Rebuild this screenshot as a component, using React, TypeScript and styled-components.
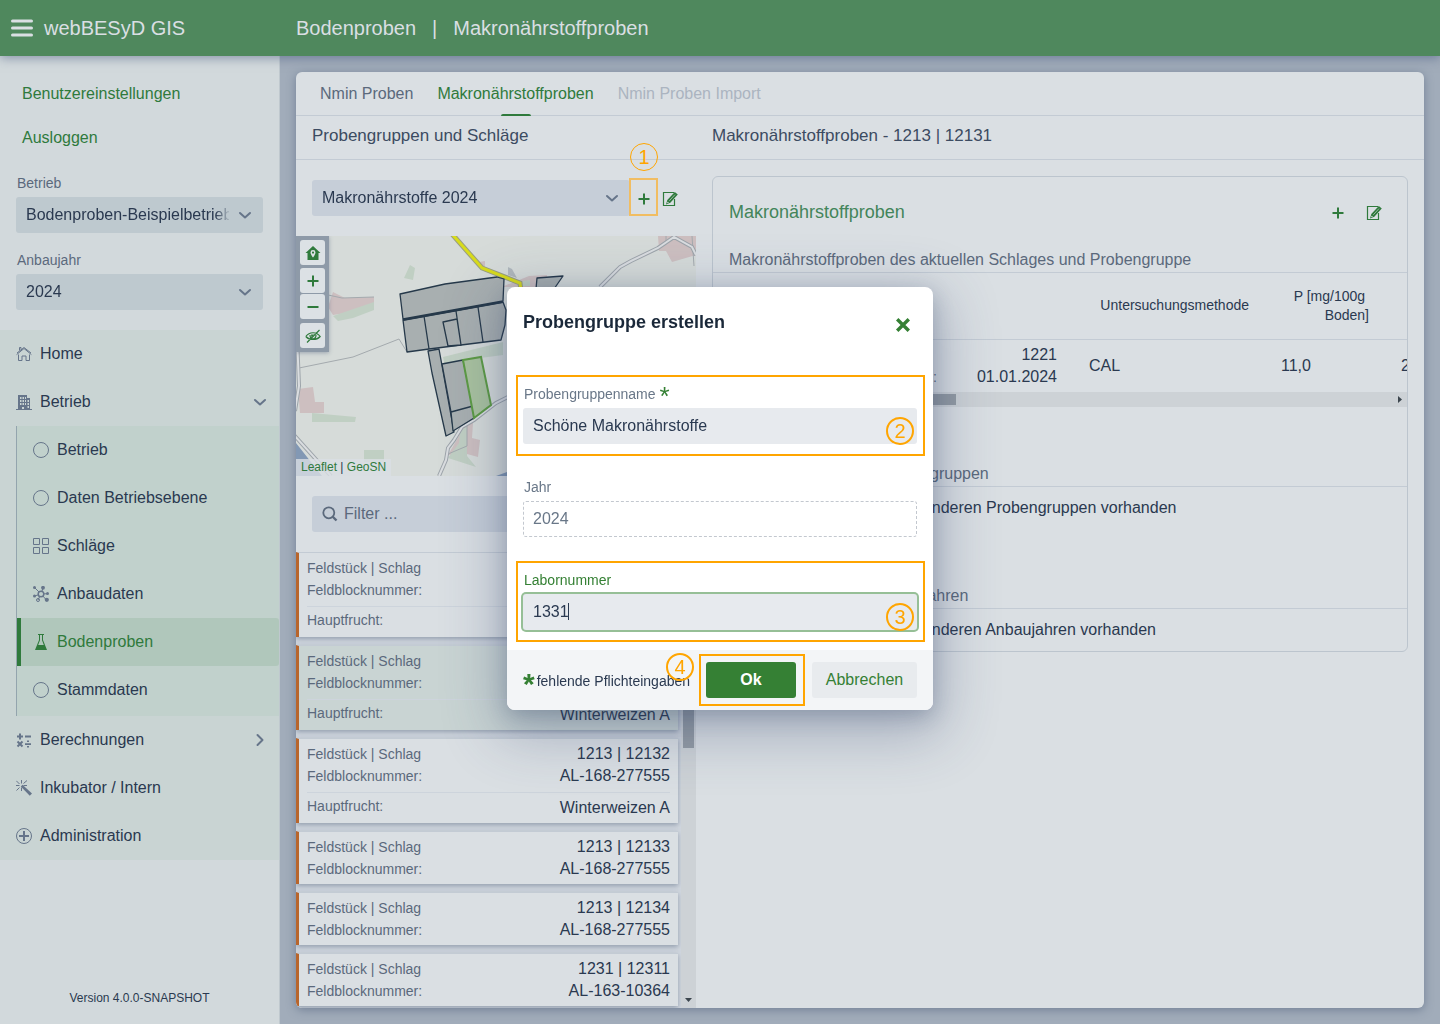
import React from 'react';
import styled, { createGlobalStyle, css } from 'styled-components';

const c = {
  green: '#2f7a3c',
  modalGreen: '#358034',
  header: '#4f885d',
  text: '#2a3950',
  sub: '#5b697c',
  icon: '#66758a',
  panel: '#dadfe3',
  line: '#c3cbd4',
  field: '#c6ced8',
  mark: '#ffa500',
};

const Global = createGlobalStyle`
  *, *::before, *::after { box-sizing: border-box; }
  html, body, #root { height: 100%; }
  body {
    margin: 0;
    background: #a1acba;
    color: ${c.text};
    font: 16px/22px "Liberation Sans", Arial, sans-serif;
    overflow: hidden;
  }
  button, input, select { font: inherit; color: inherit; }
  button { border: 0; padding: 0; background: none; cursor: pointer; }
  a { color: ${c.green}; text-decoration: none; }
  h1, h2, h3, p, ul { margin: 0; padding: 0; font-weight: normal; }
  ul { list-style: none; }
  svg { display: block; flex: none; }
`;

const Page = styled.div`
  display: grid;
  grid-template: 56px minmax(0, 1fr) / 280px minmax(0, 1fr);
  height: 100vh;
`;
const TopBar = styled.header`
  grid-column: 1 / -1;
  display: grid;
  grid-template-columns: 280px 1fr;
  align-items: center;
  background: ${c.header};
  color: #dadfe3;
  font-size: 20px;
  box-shadow: 0 2px 10px rgba(60, 80, 120, 0.5);
  z-index: 1;
`;
const Brand = styled.div`
  display: flex;
  align-items: center;
  gap: 11px;
  padding-left: 11px;
`;
const Burger = styled.button`
  color: inherit;
`;
const Crumbs = styled.h1`
  display: flex;
  gap: 16px;
  padding-left: 16px;
  font-size: 20px;
`;

const Sidebar = styled.aside`
  display: flex;
  flex-direction: column;
  background: #d2d9dc;
  border-right: 1px solid #bfc8ce;
  min-height: 0;
`;
const UserLinks = styled.div`
  display: flex;
  flex-direction: column;
  gap: 22px;
  padding: 27px 22px 24px;
`;
const SideFields = styled.div`
  display: flex;
  flex-direction: column;
  gap: 17px;
  padding: 0 16px 20px;
`;
const SideField = styled.div`
  display: flex;
  flex-direction: column;
  gap: 3px;
`;
const SideLabel = styled.label`
  padding-left: 1px;
  color: ${c.sub};
  font-size: 14px;
  line-height: 21px;
`;
const SelectBox = styled.div<{ $tone: string }>`
  position: relative;
  flex: 1;
  background: ${(p) => p.$tone};
  border-radius: 3px;
  svg {
    position: absolute;
    top: 10px;
    right: 10px;
    pointer-events: none;
    color: ${c.icon};
  }
`;
const Select = styled.select`
  display: block;
  width: 100%;
  height: 36px;
  padding: 0 34px 0 10px;
  border: 0;
  background: none;
  appearance: none;
  mask-image: linear-gradient(to right, #000 calc(100% - 48px), transparent calc(100% - 32px));
`;
const Nav = styled.nav`
  background: #c9d4d3;
`;
const navItem = css`
  display: flex;
  align-items: center;
  gap: 8px;
  height: 48px;
  color: ${c.text};
  svg { color: ${c.icon}; }
`;
const NavLink = styled.a`
  ${navItem}
  padding: 0 11px 0 16px;
  span { flex: 1; }
`;
const SubNav = styled.ul`
  margin-left: 16px;
  padding-bottom: 2px;
  background: #c1d1cc;
  border-left: 1px solid #93a4ad;
`;
const SubLink = styled.a<{ $active?: boolean }>`
  ${navItem}
  padding-left: 16px;
  ${(p) =>
    p.$active &&
    css`
      padding-left: 12px;
      border-left: 4px solid ${c.green};
      border-radius: 0 3px 3px 0;
      background: #b0c7bb;
      color: ${c.green};
      svg { color: ${c.green}; }
    `}
`;
const Version = styled.p`
  margin-top: auto;
  padding-bottom: 15px;
  font-size: 12px;
  text-align: center;
`;

const Main = styled.main`
  padding: 16px;
  min-width: 0;
  min-height: 0;
`;
const Panel = styled.section`
  display: flex;
  flex-direction: column;
  height: 100%;
  overflow: hidden;
  background: ${c.panel};
  border-radius: 6px;
  box-shadow: 0 2px 10px rgba(70, 85, 115, 0.5);
`;
const Tabs = styled.div`
  display: flex;
  gap: 24px;
  height: 44px;
  padding: 0 24px;
  border-bottom: 1px solid ${c.line};
`;
const Tab = styled.button<{ $active?: boolean }>`
  position: relative;
  height: 44px;
  color: ${(p) => (p.$active ? c.green : c.sub)};
  &:disabled { color: #abb4c0; }
  ${(p) =>
    p.$active &&
    css`
      &::after {
        content: '';
        position: absolute;
        left: 50%;
        bottom: 0;
        width: 30px;
        height: 2px;
        margin-left: -15px;
        background: ${c.green};
        border-radius: 2px 2px 0 0;
      }
    `}
`;
const Split = styled.div`
  flex: 1;
  display: grid;
  grid-template-columns: 400px minmax(0, 1fr);
  min-height: 0;
`;
const Column = styled.div`
  display: flex;
  flex-direction: column;
  min-width: 0;
  min-height: 0;
`;
const ColumnTitle = styled.h2`
  flex: none;
  height: 44px;
  padding: 0 16px;
  border-bottom: 1px solid ${c.line};
  color: #3c4b61;
  font-size: 17px;
  line-height: 39px;
`;
const GroupRow = styled.div`
  display: flex;
  align-items: center;
  padding: 20px 18px 20px 16px;
`;
const IconButton = styled.button`
  display: flex;
  align-items: center;
  justify-content: center;
  position: relative;
  width: 28px;
  height: 36px;
  padding-top: 2px;
  color: ${c.green};
`;
const EditButton = styled(IconButton)`
  width: 20px;
  justify-content: flex-end;
`;
const Frame = styled.span<{ $inset: string; $soft?: boolean }>`
  position: absolute;
  inset: ${(p) => p.$inset};
  border: 2px solid ${(p) => (p.$soft ? '#f1bd62' : c.mark)};
  pointer-events: none;
`;
const Badge = styled.span<{ $thin?: boolean }>`
  position: absolute;
  width: 28px;
  height: 28px;
  border: ${(p) => (p.$thin ? 1 : 2)}px solid ${c.mark};
  border-radius: 50%;
  color: ${c.mark};
  font-size: 20px;
  font-weight: normal;
  line-height: ${(p) => (p.$thin ? 27 : 25)}px;
  text-align: center;
  pointer-events: none;
`;
const GroupBadge = styled(Badge)`top: -37px; left: 0;`;
const FieldBadge = styled(Badge)`right: 3px; bottom: -1px;`;
const OkBadge = styled(Badge)`top: -9px; left: -40px;`;

const MapView = styled.div`
  position: relative;
  flex: none;
  height: 240px;
  overflow: hidden;
  background: #d6dbd9;
`;
const MapTools = styled.div`
  position: absolute;
  top: 0;
  left: 0;
  display: flex;
  flex-direction: column;
  width: 33px;
  padding: 4px;
  background: #8e9aa8;
  box-shadow: 0 1px 4px rgba(70, 85, 115, 0.4);
`;
const MapTool = styled.button<{ $gap?: number }>`
  display: flex;
  align-items: center;
  justify-content: center;
  height: 25px;
  margin-bottom: ${(p) => p.$gap ?? 0}px;
  background: #dce1e5;
  border-radius: 3px;
  color: ${c.green};
`;
const Attribution = styled.div`
  position: absolute;
  left: 0;
  bottom: 0;
  padding: 0 5px;
  background: rgba(218, 223, 227, 0.8);
  font-size: 12px;
  line-height: 17px;
`;
const FilterRow = styled.div`
  padding: 20px 16px;
`;
const FilterBox = styled.label`
  display: flex;
  align-items: center;
  gap: 6px;
  height: 36px;
  padding: 0 10px;
  background: ${c.field};
  border-radius: 3px;
  color: ${c.sub};
  input {
    flex: 1;
    min-width: 0;
    padding: 0;
    border: 0;
    outline: 0;
    background: none;
  }
  input::placeholder { color: ${c.sub}; opacity: 1; }
`;
const ListArea = styled.div`
  flex: 1;
  display: flex;
  min-height: 0;
`;
const List = styled.ul`
  flex: 1;
  display: flex;
  flex-direction: column;
  gap: 8px;
  padding-right: 3px;
  overflow: hidden;
  background: #d0d6de;
`;
const PlotCard = styled.li<{ $active?: boolean }>`
  flex: none;
  padding: 4px 8px;
  border-top: 1px solid ${c.line};
  border-left: 3px solid #b8652c;
  background: ${(p) => (p.$active ? '#c9d4d3' : c.panel)};
  box-shadow: 0 2px 5px rgba(70, 90, 115, 0.45);
`;
const Pair = styled.div`
  display: flex;
  justify-content: space-between;
`;
const Key = styled.span`
  color: ${c.sub};
  font-size: 14px;
`;
const Crop = styled(Pair)`
  margin-top: 5px;
  padding-top: 4px;
  border-top: 1px solid #cdd4dc;
  line-height: 22px;
  span:first-child { line-height: 19px; }
`;
const VScroll = styled.div`
  display: flex;
  flex-direction: column;
  align-items: center;
  justify-content: space-between;
  width: 15px;
  padding-bottom: 5px;
  background: #cdd2d6;
  &::before {
    content: '';
    width: 11px;
    height: 196px;
    background: #949ca4;
  }
`;

const Card = styled.div`
  margin: 16px;
  border: 1px solid #bcc5ce;
  border-radius: 6px;
  overflow: hidden;
`;
const CardHead = styled.div`
  display: flex;
  align-items: center;
  gap: 16px;
  height: 70px;
  padding: 0 23px 0 16px;
`;
const CardTitle = styled.h3`
  flex: 1;
  color: #43855a;
  font-size: 18px;
`;
const CardButton = styled(IconButton)`
  width: 20px;
`;
const SectionTitle = styled.h3<{ $top?: number }>`
  margin-top: ${(p) => p.$top ?? 0}px;
  padding: 2px 16px 1px;
  border-bottom: 1px solid ${c.line};
  color: ${c.sub};
  font-size: 16px;
`;
const Empty = styled.p`
  padding: 10px 24px;
`;
const Table = styled.table`
  table-layout: fixed;
  width: 792px;
  border-collapse: collapse;
  th {
    height: 66px;
    padding: 0 16px;
    border-bottom: 1px solid ${c.line};
    font-size: 14px;
    font-weight: normal;
    line-height: 19px;
    text-align: right;
  }
  td { height: 53px; padding: 0 16px; }
`;
const Probe = styled.div`
  display: grid;
  grid-template-columns: 1fr auto 120px;
  span { grid-column: 2; }
  b { grid-column: 3; text-align: right; font-weight: normal; }
`;
const HScroll = styled.div`
  display: flex;
  align-items: center;
  justify-content: space-between;
  height: 15px;
  padding: 0 4px 0 15px;
  background: #cdd2d6;
  &::before {
    content: '';
    width: 228px;
    height: 11px;
    background: #949ca4;
  }
`;

const Backdrop = styled.div`
  position: fixed;
  inset: 0;
  z-index: 2;
  display: flex;
  align-items: center;
  justify-content: center;
  padding-bottom: 27px;
`;
const Dialog = styled.form`
  width: 426px;
  background: #fff;
  border-radius: 8px;
  box-shadow: 0 6px 20px rgba(40, 60, 90, 0.25), 0 16px 56px 10px rgba(50, 65, 110, 0.3);
`;
const DialogHead = styled.div`
  display: flex;
  align-items: center;
  justify-content: space-between;
  height: 70px;
  padding: 0 22px 0 16px;
  h2 { color: #1a2839; font-size: 18px; font-weight: bold; }
  button { padding-top: 5px; color: ${c.modalGreen}; }
`;
const DialogBody = styled.div`
  display: flex;
  flex-direction: column;
  gap: 32px;
  padding: 26px 16px 20px;
`;
const Field = styled.div`
  position: relative;
  display: flex;
  flex-direction: column;
  gap: 2px;
`;
const Label = styled.label<{ $focus?: boolean }>`
  padding-left: 1px;
  color: ${(p) => (p.$focus ? c.modalGreen : '#697788')};
  font-size: 14px;
  line-height: 23px;
`;
const Star = styled.span<{ $large?: boolean }>`
  color: ${c.modalGreen};
  font-size: ${(p) => (p.$large ? 30 : 26)}px;
  font-weight: ${(p) => (p.$large ? 'bold' : 'normal')};
  line-height: 0;
  margin-right: 2px;
  vertical-align: ${(p) => (p.$large ? -8 : -6)}px;
`;
const Input = styled.input<{ $focus?: boolean }>`
  width: 100%;
  height: 36px;
  padding: 0 10px;
  border: 0;
  border-radius: 3px;
  outline: 0;
  background: #e7eaee;
  color: #2a3950;
  ${(p) => p.$focus && 'box-shadow: 0 0 0 2px #96bf96; caret-color: transparent;'}
  &:read-only { border: 1px dashed #c3c8cf; padding: 0 9px; background: #fff; color: #697788; }
`;
const Caret = styled.i`
  position: absolute;
  left: 45px;
  bottom: 10px;
  width: 1px;
  height: 17px;
  background: ${c.text};
`;
const DialogFoot = styled.div`
  display: flex;
  align-items: center;
  justify-content: space-between;
  height: 60px;
  padding: 0 16px;
  background: #f3f5f7;
  border-radius: 0 0 8px 8px;
  p { padding-top: 2px; font-size: 14px; white-space: nowrap; }
`;
const Actions = styled.div`
  display: flex;
  gap: 16px;
`;
const Button = styled.button<{ $primary?: boolean }>`
  position: relative;
  width: ${(p) => (p.$primary ? 90 : 105)}px;
  height: 36px;
  border-radius: 3px;
  background: ${(p) => (p.$primary ? c.modalGreen : '#e8ebee')};
  color: ${(p) => (p.$primary ? '#fff' : c.modalGreen)};
  font-weight: ${(p) => (p.$primary ? 'bold' : 'normal')};
`;

const Svg = ({ size = 16, children }: { size?: number; children: React.ReactNode }) => (
  <svg width={size} height={size} viewBox="0 0 16 16" fill="currentColor" aria-hidden="true">
    {children}
  </svg>
);
const Chevron = ({ right }: { right?: boolean }) => (
  <Svg>
    <path
      d={right ? 'M5.500 3 10.500 8l-5 5' : 'M3 6l5 4.500L13 6'}
      fill="none"
      stroke="currentColor"
      strokeWidth="2"
      strokeLinecap="round"
      strokeLinejoin="round"
    />
  </Svg>
);
const Plus = () => <Svg><path d="M7 2.500h2V7h4.500v2H9v4.500H7V9H2.500V7H7z" /></Svg>;
const Edit = () => (
  <Svg>
    <path d="M12.500 8v6.500h-11v-13H12" fill="none" stroke="currentColor" strokeWidth="1.200" />
    <path d="M12.800 1 15.800 3.600 8.300 11.800 4 13.500 5.300 9z" />
    <path d="M7.300 9.800 13 3.600" stroke="#dadfe3" strokeWidth=".6" />
    <circle cx="5.900" cy="11.500" r=".7" fill="#dadfe3" />
  </Svg>
);
const Home = () => (
  <Svg>
    <path d="M.6 8.600 8 2.500l7.400 6.100M2.500 8.500v6H6v-4.500h4v4.500h3.500v-6M1 7l7-5.500L15 7M3.500 4.500v-3h1.500v2" fill="none" stroke="currentColor" />
  </Svg>
);
const Building = () => (
  <Svg>
    <path fillRule="evenodd" d="M2 1h9v3h3v11h2v1H0v-1h2zM4 3v2h1.500V3zm2.500 0v2H8V3zM9 3v2h1V3zM4 6v2h1.500V6zm2.500 0v2H8V6zM9 6v2h1V6zM4 9v2h1.500V9zm2.500 0v2H8V9zM9 9v2h1V9zm2.500-3v2H13V6zm0 3v2H13V9zM6 13v2h2v-2zm5.500-1v2H13v-2z" />
  </Svg>
);
const Circle = () => <Svg><circle cx="8" cy="8" r="7.500" fill="none" stroke="currentColor" /></Svg>;
const Grid = () => <Svg><path d="M.5.500h6v6h-6zM9.500.500h6v6h-6zM.5 9.500h6v6h-6zM9.500 9.500h6v6h-6z" fill="none" stroke="currentColor" /></Svg>;
const Cluster = () => (
  <Svg>
    <path d="M8 8 1.500 1.500M8 8l2-6M8 8l6.500-.3M8 8l5 5.500M8 8l-3 6M8 8l-6.500 2" stroke="currentColor" />
    <circle cx="8" cy="8" r="2.800" fill="#c1d1cc" stroke="currentColor" strokeWidth="1.500" />
    <circle cx="1.500" cy="1.500" r="1.500" /><circle cx="10" cy="1.800" r="1.900" /><circle cx="14.500" cy="7.500" r="1.500" />
    <circle cx="13.800" cy="13.800" r="2.100" /><circle cx="5" cy="14" r="1.500" fill="none" stroke="currentColor" /><circle cx="1.500" cy="10" r="1.500" />
  </Svg>
);
const Flask = () => (
  <Svg>
    <path d="M5 0h6v1h-1v5l4 10H2L6 6V1H5zm2 1v5.200L5.200 11h5.600L9 6.200V1z" fillRule="evenodd" />
  </Svg>
);
const Calc = () => (
  <Svg>
    <path d="M3 1.500h2V3.500h2v2H5v2H3v-2H1v-2h2zM9 3.500h6v2H9zM9 11.200h6v1.700H9zM11 8.500h2V10h-2zM11 14h2v1.500h-2z" />
    <path d="m1.500 9.500 5 5m0-5-5 5" stroke="currentColor" strokeWidth="2" />
  </Svg>
);
const Wand = () => (
  <Svg>
    <path d="M5.500 0v3.500M.3.800 3.500 4M0 5.500h3.500M5.500 7.500V11M.5 10.500 3.500 7.500M7.500 3.500 11 .500M7.500 5.500H11" stroke="currentColor" fill="none" />
    <path d="M4.800 6.500 6.500 4.800 16 13.500 13.800 15.800z" />
  </Svg>
);
const PlusCircle = () => <Svg><circle cx="8" cy="8" r="7.500" fill="none" stroke="currentColor" /><path d="M7 3h2v4h4v2H9v4H7V9H3V7h4z" /></Svg>;
const HomePin = () => (
  <Svg>
    <path fillRule="evenodd" d="M8 1 15.500 8h-2v7h-11V8h-2zM8 5a2.500 2.500 0 0 0-2.500 2.600C5.500 9.500 8 12.500 8 12.500s2.500-3 2.500-4.900A2.500 2.500 0 0 0 8 5zm0 1.500a1.100 1.100 0 1 1 0 2.200 1.100 1.100 0 0 1 0-2.200z" />
  </Svg>
);
const EyeOff = () => (
  <Svg>
    <path d="M.8 8.500C4.500 3.500 11.500 3.500 15.200 8.500 11.500 12.500 4.500 12.500.8 8.500M5 7c0 5 6 5 6 0M2 14.500 14.500 2" fill="none" stroke="currentColor" strokeWidth="1.200" />
    <path d="M6 6.500h3l-2.500 3z" />
  </Svg>
);

const FieldMap = () => (
  <svg width="400" height="240" viewBox="0 0 400 240" role="img" aria-label="Schlagkarte">
    <g fill="#cdbfc0">
      <path d="M37 56 49 62 78 61v6L57 76 37 79 32 71zM2 153l15-2 2 15h9v11H4zM362 0h38v19l-24 7-6-11h-7zM183 26l6-1v6l-5 1zM208 50l25-10 18-1v12h-43zM171 186l6 1-1 15 8 2-2 17-11-3-19 1 12-21z" />
    </g>
    <g fill="#c0cfc3">
      <path d="M37 80l41-14v8l-21 8-15 3zM114 29l5 3-2 12-9-2zM16 177l44 4-1 5H16zM68 214h20v12H68zM147 121l60-15v13l-45 6-13 6zM164 196l7-6v30l9 11-28-9 11-15zM226 45l8-1v6h-8z" />
    </g>
    <path d="M0 207 26 240H0zM200 240l11-4v4z" fill="#8298b4" />
    <path d="M212 31l4 2 5 9-9-3z" fill="#b0b7bc" />
    <g fill="none" stroke="#a4aaae">
      <path d="M0 52 46 62 78 61M0 40 3 132 57 121 103 103 111 116M2 100 2 160M152 218l19-8v-21M370 0v5M396 0l2 30" />
    </g>
    <g fill="none" stroke="#9da4aa" strokeWidth="4">
      <path d="M304 51 324 31 335 25 362 12 378 1 396 11 400 19M-2 199 35 240M214 160 200 167 178 184 166 191 158 204 152 212 150 224 143 240M0 75 3 150-1 175" />
    </g>
    <g fill="none" stroke="#dadde0" strokeWidth="2">
      <path d="M304 51 324 31 335 25 362 12 378 1 396 11 400 19M-2 199 35 240M214 160 200 167 178 184 166 191 158 204 152 212 150 224 143 240M0 75 3 150-1 175" />
    </g>
    <path d="M156-2 186 32 224 47 225 55" fill="none" stroke="#999e82" strokeWidth="5" />
    <path d="M156-2 186 32 224 47 225 55" fill="none" stroke="#d8dc1b" strokeWidth="3" />
    <g fill="#a8afb0" stroke="#26394a" strokeWidth="1.300" strokeLinejoin="round">
      <path d="M104 58 149 48 201 41 208 43 207 65 107 83z" />
      <path d="M107 84 207 66 210 74 209 89 205 104 133 113 111 116z" />
      <path d="M128 80 133 113M160 75 165 109M182 71 187 106M147 86 161 83 165 109 152 110z" />
      <path d="M132 115 143 113 158 196 150 200 136 137z" />
      <path d="M146 128 167 124 177 170 155 176zM155 176 177 170 178 182 157 195z" />
      <path d="M241 42 267 40 258 53 240 53z" />
    </g>
    <path d="M107 84 207 66" stroke="#26394a" strokeWidth="2" />
    <path d="M167 124 185 121 195 169 178 182z" fill="#a9c29f" stroke="#5c9b43" strokeWidth="2" />
  </svg>
);

type Plot = { plot: string; block: string; crop?: string; active?: boolean };
const plots: Plot[] = [
  { plot: '1213 | 12130', block: 'AL-168-277555', crop: 'Winterweizen A' },
  { plot: '1213 | 12131', block: 'AL-168-277555', crop: 'Winterweizen A', active: true },
  { plot: '1213 | 12132', block: 'AL-168-277555', crop: 'Winterweizen A' },
  { plot: '1213 | 12133', block: 'AL-168-277555' },
  { plot: '1213 | 12134', block: 'AL-168-277555' },
  { plot: '1231 | 12311', block: 'AL-163-10364' },
];
const subItems = [
  { label: 'Betrieb', icon: <Circle /> },
  { label: 'Daten Betriebsebene', icon: <Circle /> },
  { label: 'Schläge', icon: <Grid /> },
  { label: 'Anbaudaten', icon: <Cluster /> },
  { label: 'Bodenproben', icon: <Flask />, active: true },
  { label: 'Stammdaten', icon: <Circle /> },
];

export default function App() {
  return (
    <>
      <Global />
      <Page>
        <TopBar>
          <Brand>
            <Burger aria-label="Menü">
              <svg width="22" height="18" viewBox="0 0 22 18">
                <path d="M1.500 2h19M1.500 9h19M1.500 16h19" stroke="currentColor" strokeWidth="3" strokeLinecap="round" />
              </svg>
            </Burger>
            <span>webBESyD GIS</span>
          </Brand>
          <Crumbs>
            <span>Bodenproben</span>
            <span>|</span>
            <span>Makronährstoffproben</span>
          </Crumbs>
        </TopBar>

        <Sidebar>
          <UserLinks>
            <a href="#einstellungen">Benutzereinstellungen</a>
            <a href="#logout">Ausloggen</a>
          </UserLinks>
          <SideFields>
            <SideField>
              <SideLabel htmlFor="betrieb">Betrieb</SideLabel>
              <SelectBox $tone="#bec9cf">
                <Select id="betrieb"><option>Bodenproben-Beispielbetrieb</option></Select>
                <Chevron />
              </SelectBox>
            </SideField>
            <SideField>
              <SideLabel htmlFor="anbaujahr">Anbaujahr</SideLabel>
              <SelectBox $tone="#bec9cf">
                <Select id="anbaujahr"><option>2024</option></Select>
                <Chevron />
              </SelectBox>
            </SideField>
          </SideFields>
          <Nav>
            <NavLink href="#home"><Home /><span>Home</span></NavLink>
            <NavLink href="#betrieb"><Building /><span>Betrieb</span><Chevron /></NavLink>
            <SubNav>
              {subItems.map((s) => (
                <li key={s.label}>
                  <SubLink href="#sub" $active={s.active}>{s.icon}<span>{s.label}</span></SubLink>
                </li>
              ))}
            </SubNav>
            <NavLink href="#berechnungen"><Calc /><span>Berechnungen</span><Chevron right /></NavLink>
            <NavLink href="#inkubator"><Wand /><span>Inkubator / Intern</span></NavLink>
            <NavLink href="#admin"><PlusCircle /><span>Administration</span></NavLink>
          </Nav>
          <Version>Version 4.0.0-SNAPSHOT</Version>
        </Sidebar>

        <Main>
          <Panel>
            <Tabs>
              <Tab>Nmin Proben</Tab>
              <Tab $active>Makronährstoffproben</Tab>
              <Tab disabled>Nmin Proben Import</Tab>
            </Tabs>
            <Split>
              <Column>
                <ColumnTitle>Probengruppen und Schläge</ColumnTitle>
                <GroupRow>
                  <SelectBox $tone={c.field}>
                    <Select aria-label="Probengruppe"><option>Makronährstoffe 2024</option></Select>
                    <Chevron />
                  </SelectBox>
                  <IconButton aria-label="Probengruppe hinzufügen">
                    <Plus />
                    <Frame $inset="-2px 0 0 -1px" $soft />
                    <GroupBadge $thin>1</GroupBadge>
                  </IconButton>
                  <EditButton aria-label="Probengruppe bearbeiten"><Edit /></EditButton>
                </GroupRow>
                <MapView>
                  <FieldMap />
                  <MapTools>
                    <MapTool $gap={3} aria-label="Übersicht"><HomePin /></MapTool>
                    <MapTool $gap={1} aria-label="Vergrößern"><Plus /></MapTool>
                    <MapTool $gap={4} aria-label="Verkleinern"><Svg><path d="M2.500 7h11v2h-11z" /></Svg></MapTool>
                    <MapTool aria-label="Ausblenden"><EyeOff /></MapTool>
                  </MapTools>
                  <Attribution><a href="#leaflet">Leaflet</a> | <a href="#geosn">GeoSN</a></Attribution>
                </MapView>
                <FilterRow>
                  <FilterBox>
                    <Svg>
                      <circle cx="6.800" cy="6.800" r="5.500" fill="none" stroke="currentColor" strokeWidth="1.800" />
                      <path d="m10.500 10.500 4 4" stroke="currentColor" strokeWidth="2.400" />
                    </Svg>
                    <input placeholder="Filter ..." aria-label="Filter" />
                  </FilterBox>
                </FilterRow>
                <ListArea>
                  <List>
                    {plots.map((p) => (
                      <PlotCard key={p.plot} $active={p.active}>
                        <Pair><Key>Feldstück | Schlag</Key><span>{p.plot}</span></Pair>
                        <Pair><Key>Feldblocknummer:</Key><span>{p.block}</span></Pair>
                        {p.crop && <Crop><Key>Hauptfrucht:</Key><span>{p.crop}</span></Crop>}
                      </PlotCard>
                    ))}
                  </List>
                  <VScroll>
                    <svg width="7" height="5" viewBox="0 0 7 5"><path d="M0 0h7L3.500 4z" fill="#3c464e" /></svg>
                  </VScroll>
                </ListArea>
              </Column>

              <Column>
                <ColumnTitle>Makronährstoffproben - 1213 | 12131</ColumnTitle>
                <Card>
                  <CardHead>
                    <CardTitle>Makronährstoffproben</CardTitle>
                    <CardButton aria-label="Probe hinzufügen"><Plus /></CardButton>
                    <CardButton aria-label="Probe bearbeiten"><Edit /></CardButton>
                  </CardHead>
                  <SectionTitle>Makronährstoffproben des aktuellen Schlages und Probengruppe</SectionTitle>
                  <Table>
                    <colgroup>
                      <col style={{ width: 360 }} />
                      <col style={{ width: 192 }} />
                      <col style={{ width: 120 }} />
                      <col style={{ width: 120 }} />
                    </colgroup>
                    <thead>
                      <tr>
                        <th />
                        <th>Untersuchungsmethode</th>
                        <th>P [mg/100g&nbsp;<br />Boden]</th>
                        <th />
                      </tr>
                    </thead>
                    <tbody>
                      <tr>
                        <td>
                          <Probe>
                            <Key>Labornummer:</Key><b>1221</b>
                            <Key>Probenahmedatum:</Key><b>01.01.2024</b>
                          </Probe>
                        </td>
                        <td>CAL</td>
                        <td>11,0</td>
                        <td>2</td>
                      </tr>
                    </tbody>
                  </Table>
                  <HScroll>
                    <svg width="5" height="7" viewBox="0 0 5 7"><path d="M0 0v7l4-3.500z" fill="#3c464e" /></svg>
                  </HScroll>
                  <SectionTitle $top={54}>Proben aus anderen Probengruppen</SectionTitle>
                  <Empty>Es sind keine Proben aus anderen Probengruppen vorhanden</Empty>
                  <SectionTitle $top={54}>Proben aus anderen Anbaujahren</SectionTitle>
                  <Empty>Es sind keine Proben aus anderen Anbaujahren vorhanden</Empty>
                </Card>
              </Column>
            </Split>
          </Panel>
        </Main>
      </Page>

      <Backdrop>
        <Dialog role="dialog" aria-label="Probengruppe erstellen" onSubmit={(e) => e.preventDefault()}>
          <DialogHead>
            <h2>Probengruppe erstellen</h2>
            <button type="button" aria-label="Schließen">
              <Svg><path d="m2.200 2.200 11.600 11.600m0-11.600-11.600 11.600" stroke="currentColor" strokeWidth="3.400" /></Svg>
            </button>
          </DialogHead>
          <DialogBody>
            <Field>
              <Label htmlFor="name">Probengruppenname <Star>*</Star></Label>
              <Input id="name" defaultValue="Schöne Makronährstoffe" />
              <FieldBadge>2</FieldBadge>
              <Frame $inset="-8px -8px -12px -7px" />
            </Field>
            <Field>
              <Label htmlFor="jahr">Jahr</Label>
              <Input id="jahr" value="2024" readOnly />
            </Field>
            <Field>
              <Label htmlFor="labor" $focus>Labornummer</Label>
              <Input id="labor" defaultValue="1331" $focus />
              <Caret />
              <FieldBadge>3</FieldBadge>
              <Frame $inset="-8px -8px -12px -7px" />
            </Field>
          </DialogBody>
          <DialogFoot>
            <p><Star $large>*</Star>fehlende Pflichteingaben</p>
            <Actions>
              <Button $primary type="submit">
                Ok
                <Frame $inset="-8px -9px -8px -7px" />
                <OkBadge>4</OkBadge>
              </Button>
              <Button type="button">Abbrechen</Button>
            </Actions>
          </DialogFoot>
        </Dialog>
      </Backdrop>
    </>
  );
}
